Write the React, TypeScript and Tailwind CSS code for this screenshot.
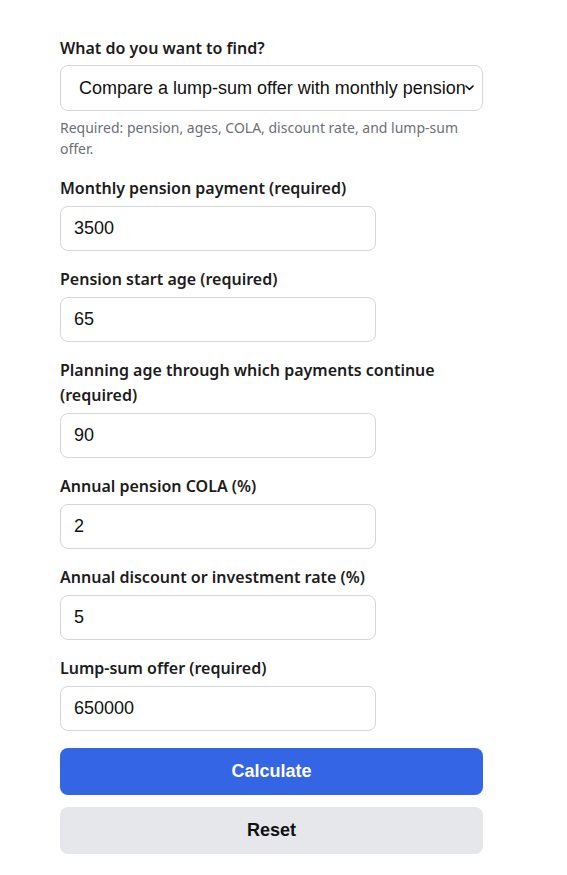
import { useState } from "react";

const fields = [
  { id: "pension", label: "Monthly pension payment (required)", value: "3500" },
  { id: "startAge", label: "Pension start age (required)", value: "65" },
  {
    id: "endAge",
    label: "Planning age through which payments continue (required)",
    value: "90",
  },
  { id: "cola", label: "Annual pension COLA (%)", value: "2" },
  { id: "rate", label: "Annual discount or investment rate (%)", value: "5" },
  { id: "lump", label: "Lump-sum offer (required)", value: "650000" },
];

export default function App() {
  const [values, setValues] = useState<Record<string, string>>(
    Object.fromEntries(fields.map((f) => [f.id, f.value])),
  );
  const [mode, setMode] = useState("compare");

  return (
    <div className="min-h-screen bg-white font-['Noto_Sans',sans-serif] text-[#1c1c1c]">
      <div className="ml-[60px] w-[423px] pt-[36px]">
        <label
          htmlFor="mode"
          className="block text-[16px] font-semibold leading-6 mb-[5px]"
        >
          What do you want to find?
        </label>
        <div className="relative">
          <select
            id="mode"
            value={mode}
            onChange={(e) => setMode(e.target.value)}
            className="block w-full h-[46px] appearance-none rounded-lg border border-[#d4d6db] bg-white pl-[18px] pr-[17px] text-[18px] text-[#111] font-['Liberation_Sans',Arial,sans-serif]"
          >
            <option value="compare">
              Compare a lump-sum offer with monthly pension
            </option>
            <option value="value">Find the present value of a pension</option>
          </select>
          {/* small chevron for the dropdown */}
          <svg
            className="pointer-events-none absolute right-[9px] top-1/2 -translate-y-1/2"
            width="9"
            height="6"
            viewBox="0 0 9 6"
            fill="none"
          >
            <path
              d="M1 1l3.5 3.5L8 1"
              stroke="#111"
              strokeWidth="1.6"
              strokeLinecap="round"
              strokeLinejoin="round"
            />
          </svg>
        </div>
        <p className="mt-[6px] text-[14px] leading-[21px] text-[#6b6f76] pr-6">
          Required: pension, ages, COLA, discount rate, and lump-sum offer.
        </p>

        <div className="mt-[17px] flex flex-col gap-[16px]">
          {fields.map((f) => (
            <div key={f.id}>
              <label
                htmlFor={f.id}
                className="block text-[16px] font-semibold leading-[25px] mb-[5px] w-[400px]"
              >
                {f.label}
              </label>
              <input
                id={f.id}
                type="text"
                inputMode="decimal"
                value={values[f.id]}
                onChange={(e) =>
                  setValues((v) => ({ ...v, [f.id]: e.target.value }))
                }
                className="block w-[316px] h-[45px] rounded-lg border border-[#d4d6db] bg-white px-[13px] text-[18px] text-[#111] font-['Liberation_Sans',Arial,sans-serif] outline-none"
              />
            </div>
          ))}
        </div>

        <button
          type="button"
          className="mt-[17px] block w-full h-[47px] rounded-lg bg-[#3465e4] text-white text-[18px] font-bold font-['Liberation_Sans',Arial,sans-serif]"
        >
          Calculate
        </button>
        <button
          type="button"
          onClick={() =>
            setValues(Object.fromEntries(fields.map((f) => [f.id, ""])))
          }
          className="mt-[12px] block w-full h-[47px] rounded-lg bg-[#e5e7eb] text-[#111] text-[18px] font-bold font-['Liberation_Sans',Arial,sans-serif]"
        >
          Reset
        </button>
      </div>
    </div>
  );
}
